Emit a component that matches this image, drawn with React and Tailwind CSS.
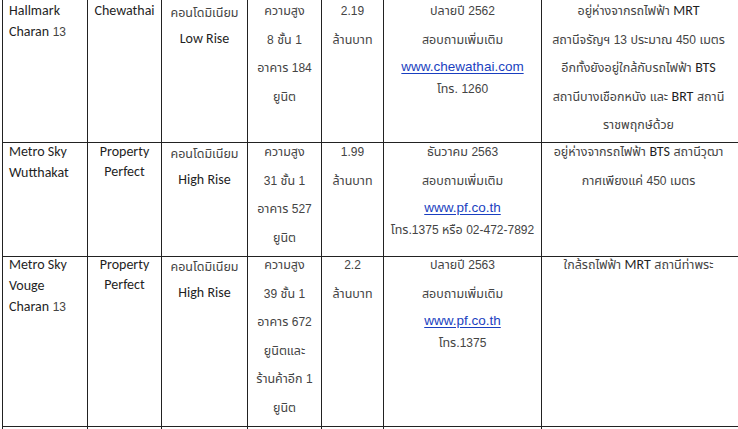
import React from "react";

const TH = "font-['Liberation_Sans','Tahoma','Noto_Sans_Thai','Noto_Sans_Thai_UI','Loma','Garuda',sans-serif] text-[12.5px] text-[#444]";
const NUM = "font-['Liberation_Sans',sans-serif] text-[12px] text-[#444]";
const LAT = "font-['Carlito','Calibri','Open_Sans',sans-serif] text-[14px] text-[#1f1f1f]";

function Mixed({ text }) {
  const parts = text.split(/([A-Za-z]+(?: [A-Za-z]+)*|[0-9][0-9.\-]*)/);
  return (
    <>
      {parts.map((p, i) =>
        p === "" ? null : /[A-Za-z]/.test(p) ? (
          <span key={i} className={LAT}>{p}</span>
        ) : /^[0-9]/.test(p) ? (
          <span key={i} className={NUM}>{p}</span>
        ) : (
          <span key={i} className={TH}>{p}</span>
        )
      )}
    </>
  );
}

function Line({ children, cls = "" }) {
  return (
    <div className={"h-[20px] leading-[20px] whitespace-nowrap " + cls}>{children}</div>
  );
}

function Link({ children }) {
  return (
    <span className="font-['Liberation_Sans',sans-serif] text-[13.5px] text-[#1a3fc0] underline underline-offset-2">
      {children}
    </span>
  );
}

function Cell({ children, left = false, shift = "", extra = "" }) {
  return (
    <div
      className={
        "border-r border-b border-[#222] " +
        (left ? "pl-[6px] text-left " : "text-center ") +
        extra
      }
    >
      <div className={shift}>{children}</div>
    </div>
  );
}

function Row({ r, shift }) {
  return (
    <>
      <Cell left shift={shift}>
        {r.c1.map((t, i) => (
          <Line key={i} cls={i === 0 ? "" : "mt-[1px]"}>
            <Mixed text={t} />
          </Line>
        ))}
      </Cell>
      <Cell shift={shift}>
        {r.c2.map((t, i) => (
          <Line key={i}>
            <Mixed text={t} />
          </Line>
        ))}
      </Cell>
      <Cell shift={shift} extra="pt-[2px]">
        <Line>
          <Mixed text="คอนโดมิเนียม" />
        </Line>
        <Line cls="mt-[5.5px]">
          <Mixed text={r.c3} />
        </Line>
      </Cell>
      <Cell shift={shift}>
        {r.c4.map((t, i) => (
          <Line key={i} cls={i === 0 ? "" : "mt-[8.5px]"}>
            <Mixed text={t} />
          </Line>
        ))}
      </Cell>
      <Cell shift={shift}>
        <Line>
          <Mixed text={r.c5} />
        </Line>
        <Line cls="mt-[8.5px]">
          <Mixed text="ล้านบาท" />
        </Line>
      </Cell>
      <Cell shift={shift}>
        <Line>
          <Mixed text={r.c6[0]} />
        </Line>
        <Line cls="mt-[8.5px]">
          <Mixed text="สอบถามเพิ่มเติม" />
        </Line>
        <Line cls="mt-[7.5px]">
          <Link>{r.c6[1]}</Link>
        </Line>
        <Line cls="mt-[1.5px]">
          <Mixed text={r.c6[2]} />
        </Line>
      </Cell>
      <Cell shift={shift} extra="pr-[6px]">
        {r.c7.map((t, i) => (
          <Line key={i} cls={i === 0 ? "" : "mt-[8.5px]"}>
            <Mixed text={t} />
          </Line>
        ))}
      </Cell>
    </>
  );
}

const rows = [
  {
    c1: ["Hallmark", "Charan 13"],
    c2: ["Chewathai"],
    c3: "Low Rise",
    c4: ["ความสูง", "8 ชั้น 1", "อาคาร 184", "ยูนิต"],
    c5: "2.19",
    c6: ["ปลายปี 2562", "www.chewathai.com", "โทร. 1260"],
    c7: [
      "อยู่ห่างจากรถไฟฟ้า MRT",
      "สถานีจรัญฯ 13 ประมาณ 450 เมตร",
      "อีกทั้งยังอยู่ใกล้กับรถไฟฟ้า BTS",
      "สถานีบางเชือกหนัง และ BRT สถานี",
      "ราชพฤกษ์ด้วย",
    ],
  },
  {
    c1: ["Metro Sky", "Wutthakat"],
    c2: ["Property", "Perfect"],
    c3: "High Rise",
    c4: ["ความสูง", "31 ชั้น 1", "อาคาร 527", "ยูนิต"],
    c5: "1.99",
    c6: ["ธันวาคม 2563", "www.pf.co.th", "โทร.1375 หรือ 02-472-7892"],
    c7: ["อยู่ห่างจากรถไฟฟ้า BTS สถานีวุฒา", "กาศเพียงแค่ 450 เมตร"],
  },
  {
    c1: ["Metro Sky", "Vouge", "Charan 13"],
    c2: ["Property", "Perfect"],
    c3: "High Rise",
    c4: ["ความสูง", "39 ชั้น 1", "อาคาร 672", "ยูนิตและ", "ร้านค้าอีก 1", "ยูนิต"],
    c5: "2.2",
    c6: ["ปลายปี 2563", "www.pf.co.th", "โทร.1375"],
    c7: ["ใกล้รถไฟฟ้า MRT สถานีท่าพระ"],
  },
];

export default function App() {
  return (
    <div className="w-[738px] h-[429px] overflow-hidden bg-white">
      <div className="ml-[2px] mt-[-1px] w-[740px] border-l border-t border-[#222] grid grid-cols-[85px_74px_86px_74px_62px_158px_200px] grid-rows-[143px_114px_170px_30px]">
        <Row r={rows[0]} shift="-mt-[1px]" />
        <Row r={rows[1]} shift="-mt-[3px]" />
        <Row r={rows[2]} shift="-mt-[4px]" />
        {[0, 1, 2, 3, 4, 5, 6].map((i) => (
          <div key={i} className="border-r border-[#222]" />
        ))}
      </div>
    </div>
  );
}
